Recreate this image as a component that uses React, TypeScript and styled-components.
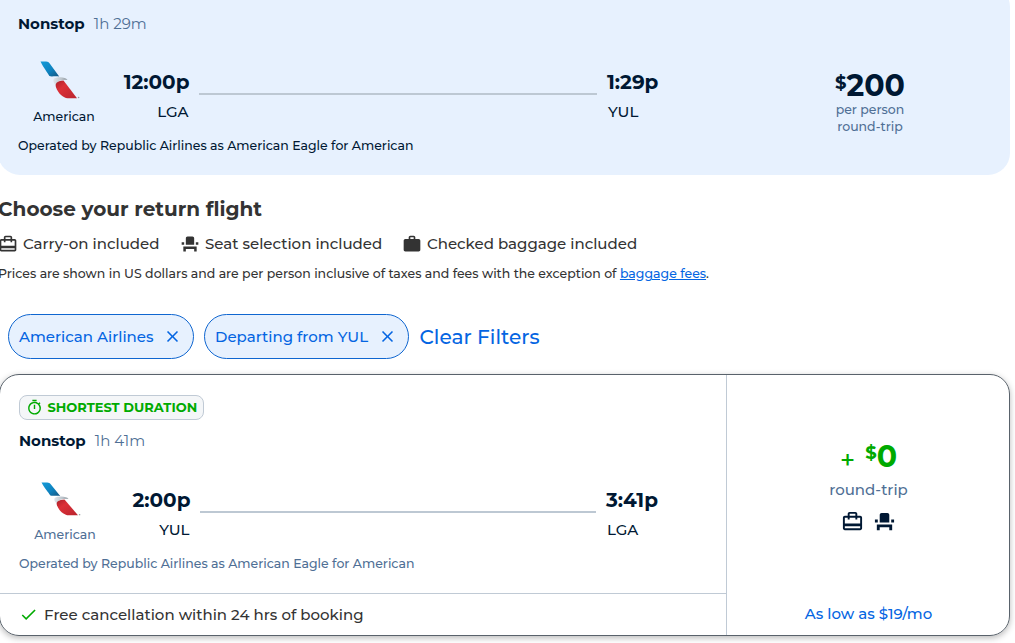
import React from "react";
import styled, { createGlobalStyle } from "styled-components";
import { MdCardTravel, MdCheck, MdClose, MdEventSeat, MdOutlineTimer, MdWork } from "react-icons/md";

const Global = createGlobalStyle`
  *, *::before, *::after { box-sizing: border-box; }
  body { margin: 0; background: #fff; overflow: hidden; font-family: Montserrat, Inter, sans-serif; font-weight: 500; }
`;

const navy = "#001833";
const slate = "#4f6f95";
const blue = "#0465e2";
const green = "#0a0";

const Page = styled.main`
  width: 1015px;
  height: 643px;
  overflow: hidden;
  display: flex;
  flex-direction: column;
`;

const Text = styled.span<{ $size?: number; $color?: string; $weight?: number; $line?: number }>`
  display: block;
  white-space: nowrap;
  font-size: ${(p) => p.$size ?? 15}px;
  line-height: ${(p) => p.$line ?? 20}px;
  color: ${(p) => p.$color ?? navy};
  font-weight: ${(p) => p.$weight ?? 500};
`;

const Hero = styled.section`
  flex: none;
  display: flex;
  width: 1012px;
  height: 190px;
  margin: -15px 0 0 -2px;
  padding: 29px 0 0 20px;
  border-radius: 22px;
  background: #e7f1fe;
`;

const Itinerary = styled.div`
  width: 707px;
  flex: none;
`;

const Summary = styled.div`
  display: flex;
  gap: 9px;
`;

const Leg = styled.div<{ $top: number; $height: number }>`
  display: flex;
  height: ${(p) => p.$height}px;
  margin-top: ${(p) => p.$top}px;
`;

const Carrier = styled.div<{ $gap: number }>`
  width: 92px;
  display: flex;
  flex-direction: column;
  align-items: center;
  flex: none;
  svg { display: block; margin: 0 8px ${(p) => p.$gap}px 0; }
`;

const Stop = styled.div<{ $end?: boolean; $top: number }>`
  width: ${(p) => (p.$end ? 60 : 80)}px;
  padding: ${(p) => p.$top}px ${(p) => (p.$end ? 0 : 0.5)}px 0;
  display: flex;
  flex-direction: column;
  gap: 7px;
  align-items: ${(p) => (p.$end ? "flex-start" : "flex-end")};
`;

const Code = styled(Text)`
  margin: 0 1px;
`;

const Route = styled.div<{ $width: number; $top: number }>`
  width: ${(p) => p.$width}px;
  height: 2px;
  margin: ${(p) => p.$top}px 10px 0 9px;
  background: #bdc8d3;
`;

const HeroPrice = styled.div`
  flex: 1;
  padding: 56px 0 0 5px;
  display: flex;
  flex-direction: column;
  align-items: center;
`;

const Amount = styled.div<{ $height: number }>`
  display: flex;
  align-items: flex-start;
  height: ${(p) => p.$height}px;
`;

const Plus = styled(Text)`
  margin-right: 10px;
`;

const Intro = styled.section`
  padding-top: 22px;
  height: 139px;
`;

const Title = styled.h1`
  margin: 0 0 0 -2px;
  font-size: 20px;
  line-height: 24px;
  font-weight: 700;
  color: #333;
`;

const Amenities = styled.div`
  display: flex;
  margin: 13px 0 10px -2px;
  color: #333;
`;

const Amenity = styled.div<{ $width: number }>`
  width: ${(p) => p.$width}px;
  display: flex;
  align-items: center;
  gap: 5px;
`;

const Note = styled.p`
  margin: 0 0 0 -2px;
  font-size: 12.5px;
  line-height: 20px;
  white-space: nowrap;
  color: #333;
  a { color: ${blue}; }
`;

const Filters = styled.section`
  display: flex;
  align-items: center;
  height: 45px;
  padding-left: 8px;
  gap: 10px;
`;

const Pill = styled.button<{ $width: number }>`
  width: ${(p) => p.$width}px;
  height: 45px;
  padding: 0 11px 0 10px;
  display: flex;
  align-items: center;
  justify-content: space-between;
  border: 1px solid #0f66d0;
  border-radius: 23px;
  background: #e7f1fe;
  color: ${blue};
  font-family: inherit;
`;

const ClearLink = styled(Text)`
  margin-left: 0.5px;
`;

const Card = styled.article`
  flex: none;
  display: flex;
  width: 1011px;
  height: 262px;
  margin: 15px 0 0 -1px;
  border: 1px solid #59626b;
  border-radius: 20px;
  box-shadow: 0 2px 6px rgba(0, 0, 0, 0.28);
`;

const Details = styled.div`
  width: 726px;
  display: flex;
  flex-direction: column;
`;

const DetailsTop = styled.div`
  height: 218px;
  padding: 20px 0 0 19px;
`;

const Badge = styled.div`
  width: 185px;
  height: 25px;
  display: flex;
  align-items: center;
  gap: 5px;
  padding-left: 5.5px;
  margin-bottom: 11px;
  border: 1px solid #c0cad5;
  border-radius: 8px;
  background: #f4f6f8;
  color: ${green};
`;

const BadgeLabel = styled(Text)`
  padding-bottom: 2px;
`;

const Perk = styled.div`
  flex: 1;
  display: flex;
  align-items: center;
  gap: 6px;
  padding-left: 19px;
  border-top: 1px solid #c0cad5;
  color: ${green};
`;

const Fare = styled.div`
  flex: 1;
  display: flex;
  flex-direction: column;
  align-items: center;
  padding: 66px 0 0 1px;
  border-left: 1px solid #c0cad5;
`;

const FareIcons = styled.div`
  display: flex;
  gap: 9px;
  margin: 9px 1px 71px 0;
  color: ${navy};
`;

function Logo({ height, id }: { height: number; id: string }) {
  return (
    <svg width="40" height={height} viewBox="0 0 40 38" preserveAspectRatio="none">
      <defs>
        <linearGradient id={id + "b"} x1="0" y1="0" x2="1" y2="1">
          <stop offset="0" stopColor="#159bd8" />
          <stop offset=".55" stopColor="#0e83c0" />
          <stop offset="1" stopColor="#15557f" />
        </linearGradient>
        <linearGradient id={id + "r"} x1="0" y1="0" x2="1" y2="1">
          <stop offset="0" stopColor="#a92029" />
          <stop offset=".35" stopColor="#dc3037" />
          <stop offset="1" stopColor="#b9242e" />
        </linearGradient>
        <linearGradient id={id + "g"} x1="0" y1="0" x2="1" y2="0">
          <stop offset="0" stopColor="#dfe5ea" />
          <stop offset=".6" stopColor="#bbc3ca" />
          <stop offset="1" stopColor="#89939b" />
        </linearGradient>
      </defs>
      <path d="M.5.5H6.2C7.9.5 8.9 1.3 9.7 2.5L19.2 15.6C15.3 14.7 11.5 16 9.4 15C7 11.1 4 7.4.5.5Z" fill={`url(#${id}b)`} />
      <path d="M13.3 19.2C13.5 16.8 17 16 20.5 16.2C23.5 16.4 26.2 17 27.5 18.8L22.5 19C18.6 19.4 16.7 21.1 16.3 24.5C14.3 22.7 13.2 21 13.3 19.2Z" fill={`url(#${id}g)`} />
      <path d="M16 26.3C14.9 22.8 16.3 20.2 23.5 19.6L37 37.2H27.5C23.5 37.2 18 32.4 16 26.3Z" fill={`url(#${id}r)`} />
      <circle cx="38.6" cy="36.5" r=".8" fill="#9299a0" />
    </svg>
  );
}

export default function App() {
  return (
    <Page>
      <Global />
      <Hero>
        <Itinerary>
          <Summary>
            <Text $weight={700}>Nonstop</Text>
            <Text $color={slate} $weight={450}>1h 29m</Text>
          </Summary>
          <Leg $top={27} $height={75}>
            <Carrier $gap={9}>
              <Logo height={38} id="out" />
              <Text $size={12.5} $line={18}>American</Text>
            </Carrier>
            <Stop $top={9}>
              <Text $size={20} $weight={700} $line={25}>12:00p</Text>
              <Code>LGA</Code>
            </Stop>
            <Route $width={398} $top={32} />
            <Stop $end $top={9}>
              <Text $size={20} $weight={700} $line={25}>1:29p</Text>
              <Code>YUL</Code>
            </Stop>
          </Leg>
          <Text $size={12.5}>Operated by Republic Airlines as American Eagle for American</Text>
        </Itinerary>
        <HeroPrice>
          <Amount $height={31}>
            <Text $size={18} $weight={700} $line={27}>$</Text>
            <Text $size={30} $weight={700} $line={31}>200</Text>
          </Amount>
          <Text $size={12.5} $color={slate} $line={17}>per person</Text>
          <Text $size={12.5} $color={slate} $line={17}>round-trip</Text>
        </HeroPrice>
      </Hero>
      <Intro>
        <Title>Choose your return flight</Title>
        <Amenities>
          <Amenity $width={182}><MdCardTravel size={20} /><Text $color="#333">Carry-on included</Text></Amenity>
          <Amenity $width={222}><MdEventSeat size={20} /><Text $color="#333">Seat selection included</Text></Amenity>
          <Amenity $width={240}><MdWork size={20} /><Text $color="#333">Checked baggage included</Text></Amenity>
        </Amenities>
        <Note>Prices are shown in US dollars and are per person inclusive of taxes and fees with the exception of <a href="#fees">baggage fees</a>.</Note>
      </Intro>
      <Filters>
        <Pill $width={186}><Text $color={blue}>American Airlines</Text><MdClose size={19} /></Pill>
        <Pill $width={205}><Text $color={blue}>Departing from YUL</Text><MdClose size={19} /></Pill>
        <ClearLink $size={20.1} $color={blue} $line={26}>Clear Filters</ClearLink>
      </Filters>
      <Card>
        <Details>
          <DetailsTop>
            <Badge>
              <MdOutlineTimer size={17} />
              <BadgeLabel $size={13} $weight={700} $color={green}>SHORTEST DURATION</BadgeLabel>
            </Badge>
            <Summary>
              <Text $weight={700}>Nonstop</Text>
              <Text $color={slate} $weight={450}>1h 41m</Text>
            </Summary>
            <Leg $top={31} $height={72}>
              <Carrier $gap={10}>
                <Logo height={34} id="back" />
                <Text $size={12.5} $line={18} $color={slate}>American</Text>
              </Carrier>
              <Stop $top={6}>
                <Text $size={20} $weight={700} $line={25}>2:00p</Text>
                <Code>YUL</Code>
              </Stop>
              <Route $width={396} $top={29} />
              <Stop $end $top={6}>
                <Text $size={20} $weight={700} $line={25}>3:41p</Text>
                <Code>LGA</Code>
              </Stop>
            </Leg>
            <Text $size={12.5} $color={slate}>Operated by Republic Airlines as American Eagle for American</Text>
          </DetailsTop>
          <Perk>
            <MdCheck size={19} />
            <Text $color="#333">Free cancellation within 24 hrs of booking</Text>
          </Perk>
        </Details>
        <Fare>
          <Amount $height={38}>
            <Plus $size={26} $color={green} $line={38}>+</Plus>
            <Text $size={18} $weight={700} $color={green} $line={25}>$</Text>
            <Text $size={30} $weight={700} $color={green} $line={31}>0</Text>
          </Amount>
          <Text $color={slate} $line={22}>round-trip</Text>
          <FareIcons><MdCardTravel size={23} /><MdEventSeat size={23} /></FareIcons>
          <Text $color={blue}>As low as $19/mo</Text>
        </Fare>
      </Card>
    </Page>
  );
}
